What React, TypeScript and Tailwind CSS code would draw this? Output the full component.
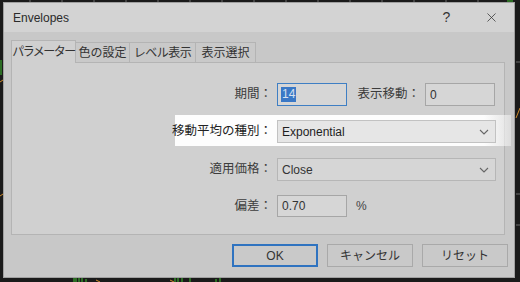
import { X } from "lucide-react"

const font = "font-['Liberation_Sans','Noto_Sans_CJK_JP',sans-serif]"

function Chevron() {
  return (
    <svg width="10" height="6" viewBox="0 0 10 6" className="shrink-0">
      <path d="M1 1l4 4 4-4" fill="none" stroke="#666" strokeWidth="1.1" />
    </svg>
  )
}

function Label({ children, className = "" }: { children: React.ReactNode; className?: string }) {
  return (
    <div className={`w-[265px] shrink-0 pr-[5px] text-right text-[12.5px] text-[#3c3c3c] ${className}`}>
      {children}
    </div>
  )
}

export default function App() {
  return (
    <div className={`relative w-[520px] h-[282px] overflow-hidden bg-[#1a1a1a] ${font}`}>
      {/* chart behind the dialog */}
      <svg className="absolute inset-0" width="520" height="282">
        <g stroke="#6a6a6a" strokeWidth="1">
          <line x1="30" y1="0" x2="30" y2="2" />
          <line x1="62" y1="0" x2="62" y2="2" />
          <line x1="94" y1="0" x2="94" y2="2" />
          <line x1="126" y1="0" x2="126" y2="2" />
          <line x1="158" y1="0" x2="158" y2="2" />
          <line x1="190" y1="0" x2="190" y2="2" />
          <line x1="222" y1="0" x2="222" y2="2" />
          <line x1="254" y1="0" x2="254" y2="2" />
          <line x1="286" y1="0" x2="286" y2="2" />
          <line x1="318" y1="0" x2="318" y2="2" />
          <line x1="350" y1="0" x2="350" y2="2" />
          <line x1="382" y1="0" x2="382" y2="2" />
          <line x1="414" y1="0" x2="414" y2="2" />
          <line x1="446" y1="0" x2="446" y2="2" />
          <line x1="478" y1="0" x2="478" y2="2" />
          <line x1="516" y1="62" x2="520" y2="62" />
          <line x1="516" y1="194" x2="520" y2="194" />
          <line x1="516" y1="225" x2="520" y2="225" />
        </g>
        <g stroke="#3fbf2f" strokeWidth="1">
          <line x1="74" y1="278" x2="74" y2="282" />
          <line x1="76" y1="278" x2="76" y2="282" />
          <line x1="79" y1="278" x2="79" y2="282" />
          <line x1="82" y1="278" x2="82" y2="282" />
          <line x1="86" y1="279" x2="86" y2="282" />
          <line x1="175" y1="278" x2="175" y2="282" />
          <line x1="178" y1="278" x2="178" y2="282" />
          <line x1="182" y1="278" x2="182" y2="282" />
          <line x1="190" y1="278" x2="190" y2="282" />
          <line x1="216" y1="279" x2="216" y2="282" />
          <line x1="220" y1="278" x2="220" y2="282" />
          <line x1="1" y1="60" x2="1" y2="75" />
          <line x1="508" y1="0" x2="508" y2="2" />
          <line x1="510" y1="0" x2="510" y2="2" />
          <line x1="512" y1="0" x2="512" y2="2" />
        </g>
        <g stroke="#d08a2a" strokeWidth="1" fill="none">
          <path d="M0 82 L3 80" />
          <path d="M0 196 L3 194" />
          <path d="M516 118 L520 108" />
          <path d="M96 280 L100 282" />
          <path d="M170 280 L174 282" />
        </g>
      </svg>

      {/* dialog */}
      <div className="relative ml-[3px] mt-[2px] flex h-[276px] w-[512px] flex-col border border-[#a0a0a0] bg-[#c8c8c8]">
        <div className="flex h-[29px] shrink-0 items-center bg-[#d3d3d3] pl-[9px]">
          <span className="text-[12px] text-[#2a2a2a]">Envelopes</span>
          <div className="ml-auto flex h-full items-center">
            <span className="flex w-[46px] justify-center pl-[3px] text-[14px] text-[#333]">?</span>
            <span className="flex w-[46px] justify-center pl-[1px]">
              <X className="h-[15px] w-[15px] text-[#333]" strokeWidth={1.2} />
            </span>
          </div>
        </div>

        {/* tabs */}
        <div className="mt-[8px] flex h-[22px] items-end pl-[7px] text-[12px] text-[#333]">
          <div className="relative z-10 mb-[-1px] flex h-[23px] w-[65px] items-center justify-center border border-b-0 border-[#b4b4b4] bg-[#d0d0d0] tracking-[-1.5px]">
            パラメーター
          </div>
          <div className="flex h-[20px] w-[54px] items-center justify-center border border-l-0 border-b-0 border-[#b4b4b4] bg-[#c9c9c9]">
            色の設定
          </div>
          <div className="flex h-[20px] w-[66px] items-center justify-center border border-l-0 border-b-0 border-[#b4b4b4] bg-[#c9c9c9] tracking-[-0.5px]">
            レベル表示
          </div>
          <div className="flex h-[20px] w-[60px] items-center justify-center border border-l-0 border-b-0 border-[#b4b4b4] bg-[#c9c9c9]">
            表示選択
          </div>
        </div>

        {/* panel */}
        <div className="relative ml-[7px] mr-[9px] h-[173px] border border-[#b4b4b4] bg-[#d0d0d0] pt-[20px]">
          <div className="absolute left-[163px] top-[52px] h-[31px] w-[336px] bg-[linear-gradient(to_right,#fdfdfd_92%,rgba(253,253,253,0.4))]" />

          <div className="relative flex h-[23px] items-center">
            <Label>期間：</Label>
            <div className="flex h-[23px] w-[70px] items-center border border-[#3f7fc4] bg-[#d6d6d6] pl-[3px]">
              <span className="bg-[#3a78c6] px-[1px] text-[12px] leading-[15px] text-[#d7e1ef]">14</span>
            </div>
            <div className="w-[78px] pr-[5px] text-right text-[12.5px] text-[#3c3c3c]">表示移動：</div>
            <div className="flex h-[23px] w-[70px] items-center border border-[#a6a6a6] bg-[#d6d6d6] pl-[4px] text-[12px] text-[#333]">
              0
            </div>
          </div>

          <div className="relative mt-[14px] flex h-[23px] items-center">
            <Label className="text-[#222]">移動平均の種別：</Label>
            <div className="flex h-[23px] w-[219px] items-center border border-[#c2c2c2] bg-[#e6e6e6] pl-[4px] pr-[6px] text-[12px] text-[#1e1e1e]">
              Exponential
              <span className="ml-auto"><Chevron /></span>
            </div>
          </div>

          <div className="relative mt-[15px] flex h-[23px] items-center">
            <Label>適用価格：</Label>
            <div className="flex h-[23px] w-[219px] items-center border border-[#b6b6b6] bg-[#d6d6d6] pl-[4px] pr-[6px] text-[12px] text-[#333]">
              Close
              <span className="ml-auto"><Chevron /></span>
            </div>
          </div>

          <div className="relative mt-[14px] flex h-[22px] items-center">
            <Label>偏差：</Label>
            <div className="flex h-[22px] w-[70px] items-center border border-[#a6a6a6] bg-[#d6d6d6] pl-[4px] text-[12px] text-[#333]">
              0.70
            </div>
            <span className="ml-[9px] text-[12px] text-[#444]">%</span>
          </div>
        </div>

        {/* buttons */}
        <div className="mt-[9px] flex justify-end gap-[9px] pr-[6px] text-[12px] text-[#333]">
          <button className="h-[23px] w-[86px] border-2 border-[#2f73c0] bg-[#c9c9c9]">OK</button>
          <button className="h-[23px] w-[86px] border border-[#a9a9a9] bg-[#c9c9c9]">キャンセル</button>
          <button className="h-[23px] w-[86px] border border-[#a9a9a9] bg-[#c9c9c9]">リセット</button>
        </div>
      </div>
    </div>
  )
}
